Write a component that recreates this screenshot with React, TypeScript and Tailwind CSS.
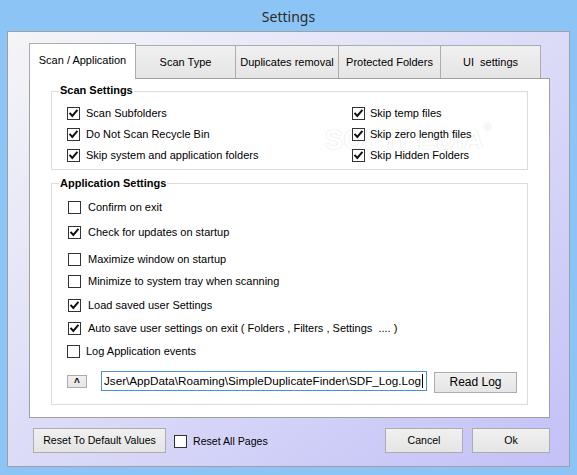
import React from "react";

const FONT = { fontFamily: '"Liberation Sans", Arial, sans-serif' };

function Check({ checked }: { checked?: boolean }) {
  return (
    <span className="flex h-[13px] w-[13px] shrink-0 items-center justify-center border border-[#333333] bg-white">
      {checked && (
        <svg width="11" height="11" viewBox="0 0 11 11">
          <path d="M2.2 5.6 L4.3 7.9 L8.8 2.6" fill="none" stroke="#111" strokeWidth="2" strokeLinecap="square" />
        </svg>
      )}
    </span>
  );
}

function Row({ label, checked, className = "", gap = "ml-[7px]", pre }: { label: string; checked?: boolean; className?: string; gap?: string; pre?: boolean }) {
  return (
    <div className={"flex h-[20px] items-center " + className}>
      <Check checked={checked} />
      <span className={"text-[11px] leading-[13px] text-black " + (pre ? "whitespace-pre " : "whitespace-nowrap ") + gap}>{label}</span>
    </div>
  );
}

function WinButton({ children, className = "" }: { children: React.ReactNode; className?: string }) {
  return (
    <div className={"flex items-center justify-center border border-[#acacac] bg-linear-to-b from-[#f0f0f0] to-[#e5e5e5] text-black whitespace-nowrap " + className}>
      {children}
    </div>
  );
}

export default function App() {
  const tabs = [
    { label: "Scan Type", w: "w-[100px]" },
    { label: "Duplicates removal", w: "w-[103px]" },
    { label: "Protected Folders", w: "w-[102px]" },
    { label: "UI  settings", w: "w-[100px]" },
  ];
  return (
    <div className="flex h-[475px] w-[577px] flex-col bg-[#8cc5f5]" style={FONT}>
      <div
        className="flex h-[31px] items-center justify-center pt-[2px] text-[14px] text-[#2b2b2b]"
        style={{ fontFamily: '"Noto Sans", "Open Sans", sans-serif' }}
      >
        Settings
      </div>
      <div className="ml-[7px] flex h-[436px] w-[563px] flex-col border border-[#a0a0a0] bg-linear-to-br from-[#f5f5f7] to-[#c3c1f7]">
        {/* tab strip */}
        <div className="ml-[21px] mt-[11px] flex h-[35px] items-end">
          <div className="relative z-10 -mb-px flex h-[36px] w-[107px] items-center justify-center border border-b-0 border-[#acacac] bg-white pb-[2px] text-[11px] text-black">
            Scan / Application
          </div>
          {tabs.map((t) => (
            <div
              key={t.label}
              className={"flex h-[33px] items-center justify-center border-t border-r border-[#acacac] bg-linear-to-b from-[#f0f0f0] to-[#e5e5e5] text-[11px] text-black whitespace-pre " + t.w}
            >
              {t.label}
            </div>
          ))}
        </div>
        {/* panel */}
        <div className="relative z-0 ml-[21px] flex h-[340px] w-[521px] flex-col border border-[#a0a0a0] bg-white">
          <div
            aria-hidden="true"
            className="pointer-events-none absolute left-[295px] top-[41px] -z-10 select-none text-[27px] font-bold tracking-[0.5px] text-white [text-shadow:0_0_1.5px_#d4d4d4]"
          >
            SOFTPEDIA<span className="align-top text-[10px]">®</span>
          </div>

          {/* Scan Settings */}
          <div className="relative ml-[21px] mt-[12px] h-[79px] w-[477px] border border-[#dcdcdc]">
            <span className="absolute -top-[8px] left-[7px] bg-white px-px text-[11px] font-bold leading-[13px] text-black">
              Scan Settings
            </span>
            <div className="grid grid-cols-[285px_1fr] gap-y-px pl-[15px] pt-[11px]">
              <Row label="Scan Subfolders" checked gap="ml-[6px]" />
              <Row label="Skip temp files" checked gap="ml-[5px]" />
              <Row label="Do Not Scan Recycle Bin" checked gap="ml-[6px]" />
              <Row label="Skip zero length files" checked gap="ml-[5px]" />
              <Row label="Skip system and application folders" checked gap="ml-[6px]" />
              <Row label="Skip Hidden Folders" checked gap="ml-[5px]" />
            </div>
          </div>

          {/* Application Settings */}
          <div className="relative ml-[21px] mt-[13px] h-[222px] w-[477px] border border-[#dcdcdc]">
            <span className="absolute -top-[7px] left-[7px] bg-white px-px text-[11px] font-bold leading-[13px] text-black">
              Application Settings
            </span>
            <div className="flex flex-col pl-[16px] pt-[13px]">
              <Row label="Confirm on exit" />
              <Row label="Check for updates on startup" checked className="mt-[5px]" />
              <Row label="Maximize window on startup" className="mt-[7px]" />
              <Row label="Minimize to system tray when scanning" className="mt-[2px]" />
              <Row label="Load saved user Settings" checked className="mt-[4px]" />
              <Row label="Auto save user settings on exit ( Folders , Filters , Settings  .... )" checked pre className="mt-[3px]" />
              <Row label="Log Application events" className="-ml-px mt-[3px]" gap="ml-[6px]" />
              <div className="-ml-px mt-[9px] flex h-[22px] items-center">
                <WinButton className="h-[13px] w-[20px] pt-[3px] text-[10px] font-bold leading-none">^</WinButton>
                <div className="ml-[14px] flex h-[20px] w-[326px] items-center overflow-hidden border border-[#4a90d9] bg-white pl-[2px]">
                  <span className="whitespace-nowrap text-[11.7px] leading-[14px] text-black">
                    Jser\AppData\Roaming\SimpleDuplicateFinder\SDF_Log.Log
                  </span>
                  <span className="ml-px h-[14px] w-px shrink-0 bg-black" />
                </div>
                <WinButton className="ml-[7px] mt-[2px] h-[21px] w-[83px] text-[12px]">Read Log</WinButton>
              </div>
            </div>
          </div>
        </div>

        {/* bottom row */}
        <div className="ml-[25px] mr-[19px] mt-[10px] flex h-[25px] items-center">
          <WinButton className="h-[25px] w-[133px] text-[10.6px]">Reset To Default Values</WinButton>
          <div className="ml-[8px] mt-[2px]">
            <Check />
          </div>
          <span className="ml-[6px] mt-[2px] text-[10.6px] text-black">Reset All Pages</span>
          <WinButton className="ml-auto h-[25px] w-[78px] text-[10.6px]">Cancel</WinButton>
          <WinButton className="ml-[9px] h-[25px] w-[78px] text-[10.6px]">Ok</WinButton>
        </div>
      </div>
    </div>
  );
}
